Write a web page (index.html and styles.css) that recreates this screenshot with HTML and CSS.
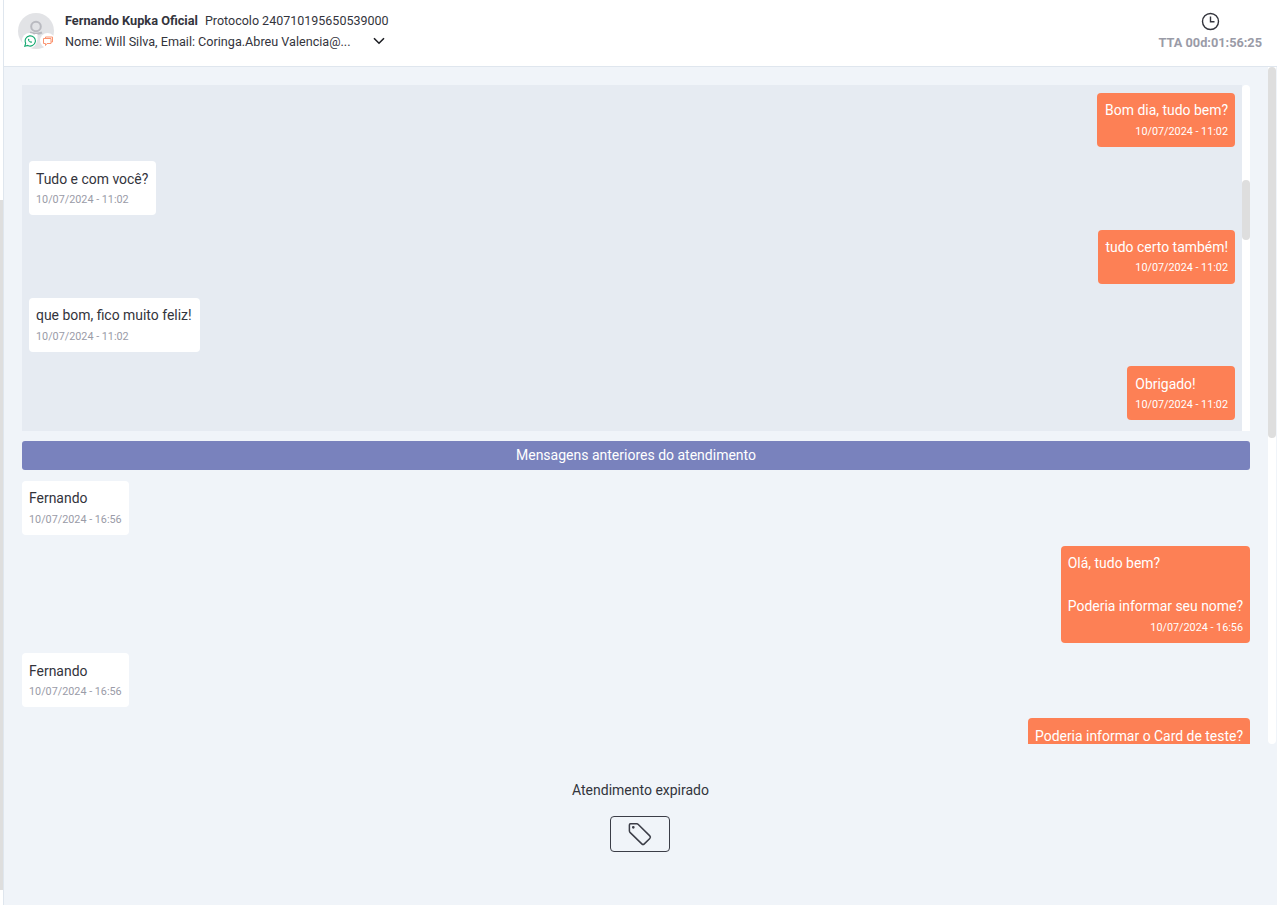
FILE: index.html
```html
<!DOCTYPE html>
<html lang="pt-BR">
<head>
  <meta charset="UTF-8">
  <title>Atendimento</title>
  <link rel="stylesheet" href="styles.css">
</head>
<body>
  <div class="rail"><div class="rail-strip"></div></div>

  <div class="main">
    <header class="top">
      <div class="avatar">
        <svg class="avatar-person" width="20" height="24" viewBox="0 0 20 24" fill="none" stroke="#b9bac0" stroke-width="2">
          <circle cx="10" cy="8.500" r="4.800"/>
          <path d="M4 14.500c3 1.500 9 1.500 12 0"/>
          <path d="M10 16v6" stroke="#fff" stroke-width="3"/>
        </svg>
        <span class="badge badge-wa">
          <svg width="12" height="12" viewBox="0 0 12 12" fill="none" stroke="#12a86f" stroke-width="1.100">
            <path d="M.8 11.200l.9-3A5.100 5.100 0 1 1 3.800 10.400z"/>
            <path d="M4.200 3.800c-.6.8 0 2 .9 2.900s2 1.400 2.800.9l-.1-1-1-.4-.5.4c-.5-.2-1-.7-1.200-1.200l.4-.5-.4-1z" fill="#12a86f" stroke="none"/>
          </svg>
        </span>
        <span class="badge badge-chat">
          <svg width="12" height="12" viewBox="0 0 12 12" fill="none" stroke="#fb9470" stroke-width="1">
            <path d="M3.500 3V2h7v5H9"/>
            <path d="M1.500 3.500h7.500v5H5L3.500 10.500V8.500h-2z"/>
          </svg>
        </span>
      </div>

      <div class="contact">
        <div class="contact-line">
          <strong>Fernando Kupka Oficial</strong>
          <span>Protocolo 240710195650539000</span>
        </div>
        <div class="contact-line">
          <span class="contact-data">Nome: Will Silva, Email: Coringa.Abreu Valencia@...</span>
          <svg class="chevron" width="12" height="8" viewBox="0 0 12 8" fill="none" stroke="#1c1d22" stroke-width="1.600">
            <path d="M1 1.200l5 5 5-5"/>
          </svg>
        </div>
      </div>

      <div class="tta">
        <svg width="19" height="19" viewBox="0 0 19 19" fill="none" stroke="#33343c" stroke-width="1.400">
          <circle cx="9.500" cy="9.500" r="8"/>
          <path d="M9.500 4.500v5.200h4"/>
        </svg>
        <span>TTA 00d:01:56:25</span>
      </div>
    </header>

    <div class="history">
      <div class="history-track"><div class="history-thumb"></div></div>

      <div class="previous">
        <div class="previous-list">
          <div class="msg msg-out">
            <p>Bom dia, tudo bem?</p>
            <time>10/07/2024 - 11:02</time>
          </div>
          <div class="msg msg-in">
            <p>Tudo e com você?</p>
            <time>10/07/2024 - 11:02</time>
          </div>
          <div class="msg msg-out">
            <p>tudo certo também!</p>
            <time>10/07/2024 - 11:02</time>
          </div>
          <div class="msg msg-in">
            <p>que bom, fico muito feliz!</p>
            <time>10/07/2024 - 11:02</time>
          </div>
          <div class="msg msg-out">
            <p>Obrigado!</p>
            <time>10/07/2024 - 11:02</time>
          </div>
        </div>
        <div class="previous-track"><div class="previous-thumb"></div></div>
      </div>

      <div class="divider">Mensagens anteriores do atendimento</div>

      <div class="current-list">
        <div class="msg msg-in">
          <p>Fernando</p>
          <time>10/07/2024 - 16:56</time>
        </div>
        <div class="msg msg-out">
          <p>Olá, tudo bem?<br><br>Poderia informar seu nome?</p>
          <time>10/07/2024 - 16:56</time>
        </div>
        <div class="msg msg-in">
          <p>Fernando</p>
          <time>10/07/2024 - 16:56</time>
        </div>
        <div class="msg msg-out">
          <p>Poderia informar o Card de teste?</p>
          <time>10/07/2024 - 16:56</time>
        </div>
      </div>
    </div>

    <footer class="bottom">
      <p>Atendimento expirado</p>
      <button class="tag-btn" type="button" aria-label="Etiquetas">
        <svg width="28" height="28" viewBox="0 0 28 28" fill="none" stroke="#3b3d47" stroke-width="1.500" stroke-linejoin="round">
          <path d="M4.500 3.800h6.300a2 2 0 0 1 1.500.6l11.500 11.500a1.800 1.800 0 0 1 0 2.500l-5.500 5.500a1.800 1.800 0 0 1-2.500 0L4 12.400a2 2 0 0 1-.6-1.500V5a1.200 1.200 0 0 1 1.100-1.200z"/>
          <circle cx="7.300" cy="7.300" r=".6" fill="#3b3d47"/>
        </svg>
      </button>
    </footer>
  </div>
</body>
</html>
```

FILE: styles.css
```css
:root {
  --page-bg: #f0f4f9;
  --box-bg: #e6ebf2;
  --line: #dfe6ee;
  --orange: #fd8055;
  --purple: #7982bd;
  --text: #33343c;
  --muted: #9a9ba7;
  --thumb: #dedede;
}

* {
  box-sizing: border-box;
}

html, body {
  height: 100%;
}

body {
  margin: 0;
  display: flex;
  overflow: hidden;
  font-family: Roboto, sans-serif;
  font-size: 14px;
  color: var(--text);
  background-color: #fff;
}

.rail {
  width: 3px;
  flex: none;
  padding-top: 200px;
}

.rail-strip {
  height: 690px;
  background-color: var(--thumb);
}

.main {
  flex: 1;
  min-width: 0;
  display: flex;
  flex-direction: column;
  background-color: var(--page-bg);
  border-left: 1px solid var(--line);
}

/* top bar */
.top {
  height: 67px;
  flex: none;
  display: flex;
  align-items: center;
  padding: 0 15px 4px 14px;
  background-color: #fff;
  border-bottom: 1px solid var(--line);
}

.avatar {
  position: relative;
  width: 36px;
  height: 36px;
  border-radius: 50%;
  background-color: #e2e3e6;
}

.avatar-person {
  position: absolute;
  left: 8px;
  top: 5px;
}

.badge {
  position: absolute;
  top: 20px;
  width: 15px;
  height: 15px;
  display: flex;
  align-items: center;
  justify-content: center;
  border-radius: 50%;
  background-color: #fff;
}

.badge-wa {
  left: 4px;
}

.badge-chat {
  left: 22px;
}

.contact {
  margin-left: 11px;
  font-size: 12.500px;
}

.contact-line {
  display: flex;
  align-items: center;
  height: 20.500px;
  white-space: nowrap;
}

.contact-line strong {
  font-size: 12.750px;
  font-weight: 700;
  margin-right: 7px;
}

.contact-data {
  width: 307px;
  font-size: 12.620px;
}

.chevron {
  margin-left: 1px;
}

.tta {
  margin-left: auto;
  margin-top: -1px;
  display: flex;
  flex-direction: column;
  align-items: center;
  gap: 4px;
  font-size: 12.750px;
  font-weight: 700;
  color: var(--muted);
}

/* message history */
.history {
  position: relative;
  height: 677px;
  flex: none;
  overflow: hidden;
  padding: 18px 27px 0 18px;
}

.history-track {
  position: absolute;
  top: 0;
  right: 1px;
  bottom: 0;
  width: 8px;
  background-color: #fff;
  border-radius: 0 0 4px 4px;
}

.history-thumb {
  height: 371px;
  background-color: var(--thumb);
  border-radius: 4px;
}

.previous {
  position: relative;
  display: flex;
  height: 346px;
  overflow: hidden;
}

.previous-list {
  flex: 1;
  display: flex;
  flex-direction: column;
  gap: 14.300px;
  padding: 8px 7px;
  background-color: var(--box-bg);
}

.previous-track {
  width: 8px;
  flex: none;
  padding-top: 95px;
  background-color: #fff;
  border-radius: 4px 4px 0 0;
}

.previous-thumb {
  height: 60px;
  background-color: var(--thumb);
  border-radius: 4px;
}

.divider {
  height: 29px;
  margin: 10px 0 11px;
  line-height: 29px;
  text-align: center;
  color: #fff;
  background-color: var(--purple);
  border-radius: 3px;
}

.current-list {
  display: flex;
  flex-direction: column;
  gap: 10.750px;
}

.msg {
  padding: 7.400px 7px 6.600px;
  border-radius: 4px;
  width: fit-content;
}

.msg p {
  margin: 0;
  font-size: 13.950px;
  line-height: 21.500px;
}

.msg time {
  display: block;
  height: 18.500px;
  line-height: 20.400px;
  font-size: 10.800px;
}

.msg-in {
  background-color: #fff;
}

.msg-in time {
  color: var(--muted);
}

.msg-out {
  margin-left: auto;
  color: #fff;
  background-color: var(--orange);
}

.msg-out time {
  text-align: right;
}

.previous-list .msg-out {
  padding-left: 8px;
}

.previous-list .msg-in {
  padding-right: 8px;
}

/* expired footer */
.bottom {
  flex: 1;
  display: flex;
  flex-direction: column;
  align-items: center;
}

.bottom p {
  margin: 36px 0 16px;
  line-height: 20px;
}

.tag-btn {
  width: 60px;
  height: 36px;
  margin-right: 1px;
  padding: 0;
  display: flex;
  align-items: center;
  justify-content: center;
  background: none;
  border: 1px solid #3b3d47;
  border-radius: 4px;
}
```
